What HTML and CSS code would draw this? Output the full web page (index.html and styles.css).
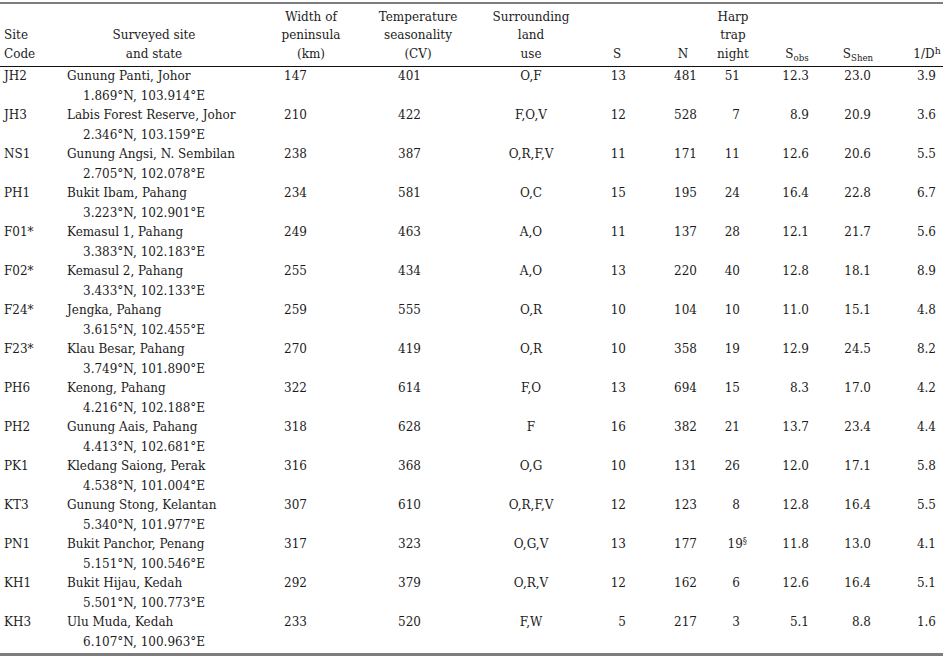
FILE: index.html
```html
<!DOCTYPE html>
<html lang="en">
<head>
<meta charset="utf-8">
<title>Surveyed sites</title>
<link rel="stylesheet" href="styles.css">
</head>
<body>
<table class="sites">
  <colgroup>
    <col class="w-code"><col class="w-site"><col class="w-width"><col class="w-temp"><col class="w-land"><col class="w-s"><col class="w-n"><col class="w-harp"><col class="w-sobs"><col class="w-shen"><col class="w-d">
  </colgroup>
  <thead>
    <tr>
      <th>Site<br>Code</th>
      <th>Surveyed site<br>and state</th>
      <th>Width of<br>peninsula<br>(km)</th>
      <th>Temperature<br>seasonality<br>(CV)</th>
      <th>Surrounding<br>land<br>use</th>
      <th>S</th>
      <th>N</th>
      <th>Harp<br>trap<br>night</th>
      <th>S<sub class="sub-obs">obs</sub></th>
      <th>S<sub class="sub-shen">Shen</sub></th>
      <th>1/D<sup class="sup-h">h</sup></th>
    </tr>
  </thead>
  <tbody>
    <tr><td>JH2</td><td><div>Gunung Panti, Johor</div><div class="coord">1.869°N, 103.914°E</div></td><td>147</td><td>401</td><td>O,F</td><td>13</td><td>481</td><td>51</td><td>12.3</td><td>23.0</td><td>3.9</td></tr>
    <tr><td>JH3</td><td><div>Labis Forest Reserve, Johor</div><div class="coord">2.346°N, 103.159°E</div></td><td>210</td><td>422</td><td>F,O,V</td><td>12</td><td>528</td><td>7</td><td>8.9</td><td>20.9</td><td>3.6</td></tr>
    <tr><td>NS1</td><td><div>Gunung Angsi, N. Sembilan</div><div class="coord">2.705°N, 102.078°E</div></td><td>238</td><td>387</td><td>O,R,F,V</td><td>11</td><td>171</td><td>11</td><td>12.6</td><td>20.6</td><td>5.5</td></tr>
    <tr><td>PH1</td><td><div>Bukit Ibam, Pahang</div><div class="coord">3.223°N, 102.901°E</div></td><td>234</td><td>581</td><td>O,C</td><td>15</td><td>195</td><td>24</td><td>16.4</td><td>22.8</td><td>6.7</td></tr>
    <tr><td>F01*</td><td><div>Kemasul 1, Pahang</div><div class="coord">3.383°N, 102.183°E</div></td><td>249</td><td>463</td><td>A,O</td><td>11</td><td>137</td><td>28</td><td>12.1</td><td>21.7</td><td>5.6</td></tr>
    <tr><td>F02*</td><td><div>Kemasul 2, Pahang</div><div class="coord">3.433°N, 102.133°E</div></td><td>255</td><td>434</td><td>A,O</td><td>13</td><td>220</td><td>40</td><td>12.8</td><td>18.1</td><td>8.9</td></tr>
    <tr><td>F24*</td><td><div>Jengka, Pahang</div><div class="coord">3.615°N, 102.455°E</div></td><td>259</td><td>555</td><td>O,R</td><td>10</td><td>104</td><td>10</td><td>11.0</td><td>15.1</td><td>4.8</td></tr>
    <tr><td>F23*</td><td><div>Klau Besar, Pahang</div><div class="coord">3.749°N, 101.890°E</div></td><td>270</td><td>419</td><td>O,R</td><td>10</td><td>358</td><td>19</td><td>12.9</td><td>24.5</td><td>8.2</td></tr>
    <tr><td>PH6</td><td><div>Kenong, Pahang</div><div class="coord">4.216°N, 102.188°E</div></td><td>322</td><td>614</td><td>F,O</td><td>13</td><td>694</td><td>15</td><td>8.3</td><td>17.0</td><td>4.2</td></tr>
    <tr><td>PH2</td><td><div>Gunung Aais, Pahang</div><div class="coord">4.413°N, 102.681°E</div></td><td>318</td><td>628</td><td>F</td><td>16</td><td>382</td><td>21</td><td>13.7</td><td>23.4</td><td>4.4</td></tr>
    <tr><td>PK1</td><td><div>Kledang Saiong, Perak</div><div class="coord">4.538°N, 101.004°E</div></td><td>316</td><td>368</td><td>O,G</td><td>10</td><td>131</td><td>26</td><td>12.0</td><td>17.1</td><td>5.8</td></tr>
    <tr><td>KT3</td><td><div>Gunung Stong, Kelantan</div><div class="coord">5.340°N, 101.977°E</div></td><td>307</td><td>610</td><td>O,R,F,V</td><td>12</td><td>123</td><td>8</td><td>12.8</td><td>16.4</td><td>5.5</td></tr>
    <tr><td>PN1</td><td><div>Bukit Panchor, Penang</div><div class="coord">5.151°N, 100.546°E</div></td><td>317</td><td>323</td><td>O,G,V</td><td>13</td><td>177</td><td>19<sup class="note">§</sup></td><td>11.8</td><td>13.0</td><td>4.1</td></tr>
    <tr><td>KH1</td><td><div>Bukit Hijau, Kedah</div><div class="coord">5.501°N, 100.773°E</div></td><td>292</td><td>379</td><td>O,R,V</td><td>12</td><td>162</td><td>6</td><td>12.6</td><td>16.4</td><td>5.1</td></tr>
    <tr><td>KH3</td><td><div>Ulu Muda, Kedah</div><div class="coord">6.107°N, 100.963°E</div></td><td>233</td><td>520</td><td>F,W</td><td>5</td><td>217</td><td>3</td><td>5.1</td><td>8.8</td><td>1.6</td></tr>
  </tbody>
</table>
</body>
</html>
```

FILE: styles.css
```css
html, body {
  margin: 0;
  padding: 0;
  background: #ffffff;
}

body {
  font-family: "DejaVu Serif", "Liberation Serif", serif;
  font-size: 12px;
  color: #1c1c1c;
}

.sites {
  width: 943px;
  margin-top: 2px;
  border-collapse: collapse;
  table-layout: fixed;
  border-top: 2px solid #7d7d7d;
  border-bottom: 3px solid #7d7d7d;
}

.w-code { width: 62px; }
.w-site { width: 210px; }
.w-width { width: 78px; }
.w-temp { width: 120px; }
.w-land { width: 120px; }
.w-s { width: 60px; }
.w-n { width: 60px; }
.w-harp { width: 50px; }
.w-sobs { width: 70px; }
.w-shen { width: 60px; }
.w-d { width: 53px; }

.sites th {
  height: 59px;
  padding: 0 0 3px 0;
  font-weight: normal;
  line-height: 18.5px;
  vertical-align: bottom;
  text-align: center;
  border-bottom: 1px solid #111111;
  white-space: nowrap;
}

.sites th:nth-child(1) { text-align: left; padding-left: 4px; }
.sites th:nth-child(2) { padding-right: 26px; }
.sites th:nth-child(4) { padding-left: 16px; }
.sites th:nth-child(5) { padding-left: 2px; }
.sites th:nth-child(6) { padding-right: 6px; }
.sites th:nth-child(7) { padding-left: 6px; }
.sites th:nth-child(8) { padding-right: 4px; }
.sites th:nth-child(9) { padding-left: 4px; }
.sites th:nth-child(10) { padding-right: 4px; }
.sites th:nth-child(11) { padding-left: 21px; }

.sites td {
  height: 39px;
  padding: 0;
  line-height: 19.5px;
  vertical-align: top;
  text-align: right;
  white-space: nowrap;
}

.sites tbody tr:last-child td {
  height: 40px;
}

.sites td:nth-child(1) { text-align: left; padding-left: 4px; }
.sites td:nth-child(2) { text-align: left; padding-left: 5px; }
.sites td:nth-child(3) { padding-right: 43px; }
.sites td:nth-child(4) { padding-right: 49px; }
.sites td:nth-child(5) { text-align: center; padding-left: 2px; }
.sites td:nth-child(6) { padding-right: 24px; }
.sites td:nth-child(7) { padding-right: 13px; }
.sites td:nth-child(8) { padding-right: 20px; }
.sites td:nth-child(9) { padding-right: 21px; }
.sites td:nth-child(10) { padding-right: 19px; }
.sites td:nth-child(11) { padding-right: 7px; }

.coord {
  padding-left: 16px;
}

.sub-obs,
.sub-shen {
  font-size: 0.72em;
  vertical-align: -0.35em;
  line-height: 0;
}

.sup-h {
  font-size: 0.78em;
  vertical-align: 0.45em;
  line-height: 0;
}

.note {
  font-size: 0.7em;
  vertical-align: 0.5em;
  line-height: 0;
  margin-right: -7px;
}
```
